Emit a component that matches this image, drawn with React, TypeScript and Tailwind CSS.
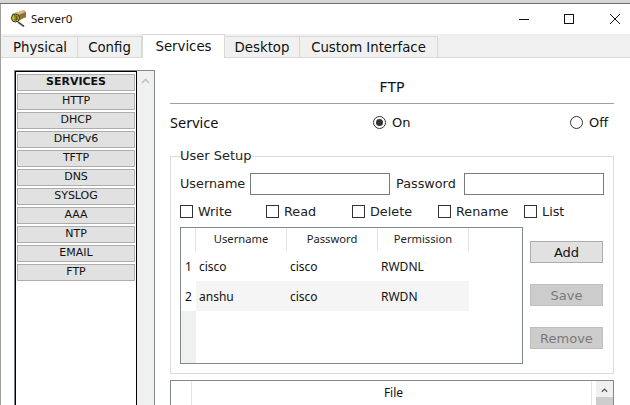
const FONT = "font-['DejaVu_Sans',sans-serif]";

function ServerIcon() {
  return (
    <svg width="17" height="18" viewBox="0 0 17 18" className="-mt-[2px]">
      <path d="M8 13l6 4.5" stroke="#4a4a4a" strokeWidth="1.6" />
      <polygon points="2,5 14,1 16,3 16,8 6,13 2,10" fill="#a98a4e" />
      <polygon points="2,5 14,1 16,3 5,7" fill="#d9bd84" />
      <polygon points="7,7 16,3 16,8 8,11" fill="#8c7238" />
      <circle cx="5.5" cy="9" r="4" fill="#c5c82a" stroke="#34341c" strokeWidth="1" />
      <path d="M4 7h3v4H4M4.5 9H7" stroke="#222" strokeWidth="0.8" fill="none" />
    </svg>
  );
}

function Tab({ label, w, active }: { label: string; w: string; active?: boolean }) {
  return active ? (
    <div className={`${w} h-[24px] bg-white border-x border-t border-[#d9d9d9] flex items-center justify-center text-[13.3px] text-[#111] -mb-[1px] z-10`}>{label}</div>
  ) : (
    <div className={`${w} h-[21px] bg-[#f0f0f0] border-r border-t border-[#d9d9d9] flex items-center justify-center text-[13.3px] text-[#111] pt-[1px]`}>{label}</div>
  );
}

function SvcBtn({ label, bold }: { label: string; bold?: boolean }) {
  return (
    <div className={`h-[17px] w-[118px] bg-[#e1e1e1] border border-[#adadad] flex items-center justify-center text-[11px] text-[#111] ${bold ? "font-bold" : ""}`}>{label}</div>
  );
}

function Radio({ on }: { on?: boolean }) {
  return (
    <span className="w-[13px] h-[13px] rounded-full border border-[#333] bg-white flex items-center justify-center">
      {on && <span className="w-[7px] h-[7px] rounded-full bg-[#333]" />}
    </span>
  );
}

function Check({ label, w }: { label: string; w: string }) {
  return (
    <div className={`${w} flex items-center gap-[5px] text-[12.8px] text-[#222]`}>
      <span className="w-[13px] h-[13px] border border-[#333] bg-white" />
      <span>{label}</span>
    </div>
  );
}

function Row({ n, a, b, c, shade }: { n: string; a: string; b: string; c: string; shade?: boolean }) {
  return (
    <div className="flex h-[30px] items-center text-[12px] text-[#111] font-['Noto_Sans',sans-serif]">
      <div className="w-[15px] h-full flex items-center justify-center bg-white pt-[1px]">{n}</div>
      <div className={`flex h-full items-center w-[273px] pt-[2px] ${shade ? "bg-[#f5f5f5]" : "bg-white"}`}>
        <div className="w-[91px] pl-[3px]">{a}</div>
        <div className="w-[91px] pl-[3px]">{b}</div>
        <div className="w-[91px] pl-[3px]">{c}</div>
      </div>
    </div>
  );
}

function Head({ label }: { label: string }) {
  return <div className="w-[91px] h-full border-r border-[#e3e3e3] flex items-center justify-center text-[11.2px] text-[#222] font-['Noto_Sans',sans-serif]">{label}</div>;
}

function SideBtn({ label, off }: { label: string; off?: boolean }) {
  return (
    <div className={`h-[22px] w-[73px] border flex items-center justify-center text-[13px] pt-[1px] ${off ? "bg-[#cccccc] border-[#bfbfbf] text-[#7a7a7a]" : "bg-[#e1e1e1] border-[#adadad] text-[#111]"}`}>{label}</div>
  );
}

function Chevron({ color }: { color: string }) {
  return (
    <svg width="9" height="6" viewBox="0 0 9 6" fill="none">
      <path d="M1 5l3.5-3.5L8 5" stroke={color} strokeWidth="1.6" />
    </svg>
  );
}

export default function App() {
  const services = ["HTTP", "DHCP", "DHCPv6", "TFTP", "DNS", "SYSLOG", "AAA", "NTP", "EMAIL", "FTP"];
  return (
    <div className={`${FONT} w-[630px] h-[405px] overflow-hidden flex flex-col bg-white`}>
      <div className="h-[3px] bg-[#d6d6d6] shrink-0" />
      <div className="h-[1px] bg-[#6e6e6e] shrink-0" />
      <div className="flex-1 min-h-0 flex flex-col border-l border-[#a0a0a0]">
        <div className="h-[30px] shrink-0 flex items-center pl-[9px]">
          <ServerIcon />
          <span className="ml-[4px] text-[11.5px] text-[#111] font-['Noto_Sans',sans-serif]">Server0</span>
          <div className="ml-auto flex items-center">
            <div className="w-[10px] h-[1px] bg-[#111] mr-[35px]" />
            <div className="w-[10px] h-[10px] border border-[#111] mr-[36px]" />
            <svg width="10" height="10" viewBox="0 0 10 10" className="mr-[10px]"><path d="M0 0l10 10M10 0L0 10" stroke="#111" strokeWidth="1" /></svg>
          </div>
        </div>
        <div className="h-[24px] shrink-0 bg-[#f0f0f0] border-b border-[#d9d9d9] flex items-end pl-[2px]">
          <Tab label="Physical" w="w-[75px]" />
          <Tab label="Config" w="w-[64px]" />
          <Tab label="Services" w="w-[83px]" active />
          <Tab label="Desktop" w="w-[75px]" />
          <Tab label="Custom Interface" w="w-[138px]" />
        </div>
        <div className="flex-1 min-h-0 flex pl-[13px] pt-[12px]">
          <div className="w-[141px] h-[340px] shrink-0 flex border border-[#828790] border-b-0">
            <div className="w-[122px] border-x border-t border-black bg-white pl-[1px] pt-[2px] flex flex-col gap-[2px]">
              <SvcBtn label="SERVICES" bold />
              {services.map((s) => <SvcBtn key={s} label={s} />)}
            </div>
            <div className="flex-1 bg-[#f0f0f0] flex justify-center pt-[7px]">
              <Chevron color="#c4c4c4" />
            </div>
          </div>
          <div className="ml-[15px] w-[444px] shrink-0 flex flex-col">
            <div className="h-[34px] shrink-0 border-b border-[#a0a0a0] flex items-center justify-center text-[14px] text-[#111] pt-[2px]">FTP</div>
            <div className="h-[37px] shrink-0 flex items-center text-[14px] text-[#111]">
              <span className="w-[203px] text-[14.5px] font-['Noto_Sans',sans-serif]">Service</span>
              <Radio on />
              <span className="ml-[6px] text-[13px] w-[178px]">On</span>
              <Radio />
              <span className="ml-[6px] text-[13px]">Off</span>
            </div>
            <fieldset className="h-[228px] border border-[#dcdcdc] px-[9px] mt-[5px] shrink-0">
              <legend className="text-[13px] text-[#222] h-[20px] leading-[20px]">User Setup</legend>
              <div className="flex items-center h-[22px] mt-[7px] text-[12.8px] text-[#222]">
                <span className="w-[70px]">Username</span>
                <span className="w-[140px] h-[22px] border border-[#7a7a7a] bg-white" />
                <span className="ml-[6px] w-[68px]">Password</span>
                <span className="w-[140px] h-[22px] border border-[#7a7a7a] bg-white" />
              </div>
              <div className="flex items-center h-[13px] mt-[10px]">
                <Check label="Write" w="w-[86px]" />
                <Check label="Read" w="w-[86px]" />
                <Check label="Delete" w="w-[86px]" />
                <Check label="Rename" w="w-[86px]" />
                <Check label="List" w="w-[60px]" />
              </div>
              <div className="flex mt-[9px]">
                <div className="w-[343px] h-[137px] border border-[#828790] bg-white flex flex-col">
                  <div className="flex h-[23px] shrink-0">
                    <div className="w-[15px] border-r border-[#e3e3e3]" />
                    <Head label="Username" />
                    <Head label="Password" />
                    <Head label="Permission" />
                  </div>
                  <Row n="1" a="cisco" b="cisco" c="RWDNL" />
                  <Row n="2" a="anshu" b="cisco" c="RWDN" shade />
                  <div className="flex-1 w-[15px] bg-[#f0f0f0]" />
                </div>
                <div className="ml-[7px] pt-[14px] flex flex-col gap-[21px]">
                  <SideBtn label="Add" />
                  <SideBtn label="Save" off />
                  <SideBtn label="Remove" off />
                </div>
              </div>
            </fieldset>
            <div className="h-[40px] shrink-0 mt-[6px] border border-[#828790] flex">
              <div className="w-[21px] border-r border-[#e3e3e3]" />
              <div className="w-[400px] border-r border-[#e3e3e3] h-[24px] flex items-center justify-center text-[12px] text-[#111] font-['Noto_Sans',sans-serif] pl-[4px]">File</div>
              <div className="w-[4px]" />
              <div className="flex-1 bg-[#f0f0f0] flex flex-col items-center pt-[7px]">
                <Chevron color="#555" />
                <div className="mt-[4px] w-full h-[30px] bg-[#cdcdcd]" />
              </div>
            </div>
          </div>
        </div>
      </div>
    </div>
  );
}
